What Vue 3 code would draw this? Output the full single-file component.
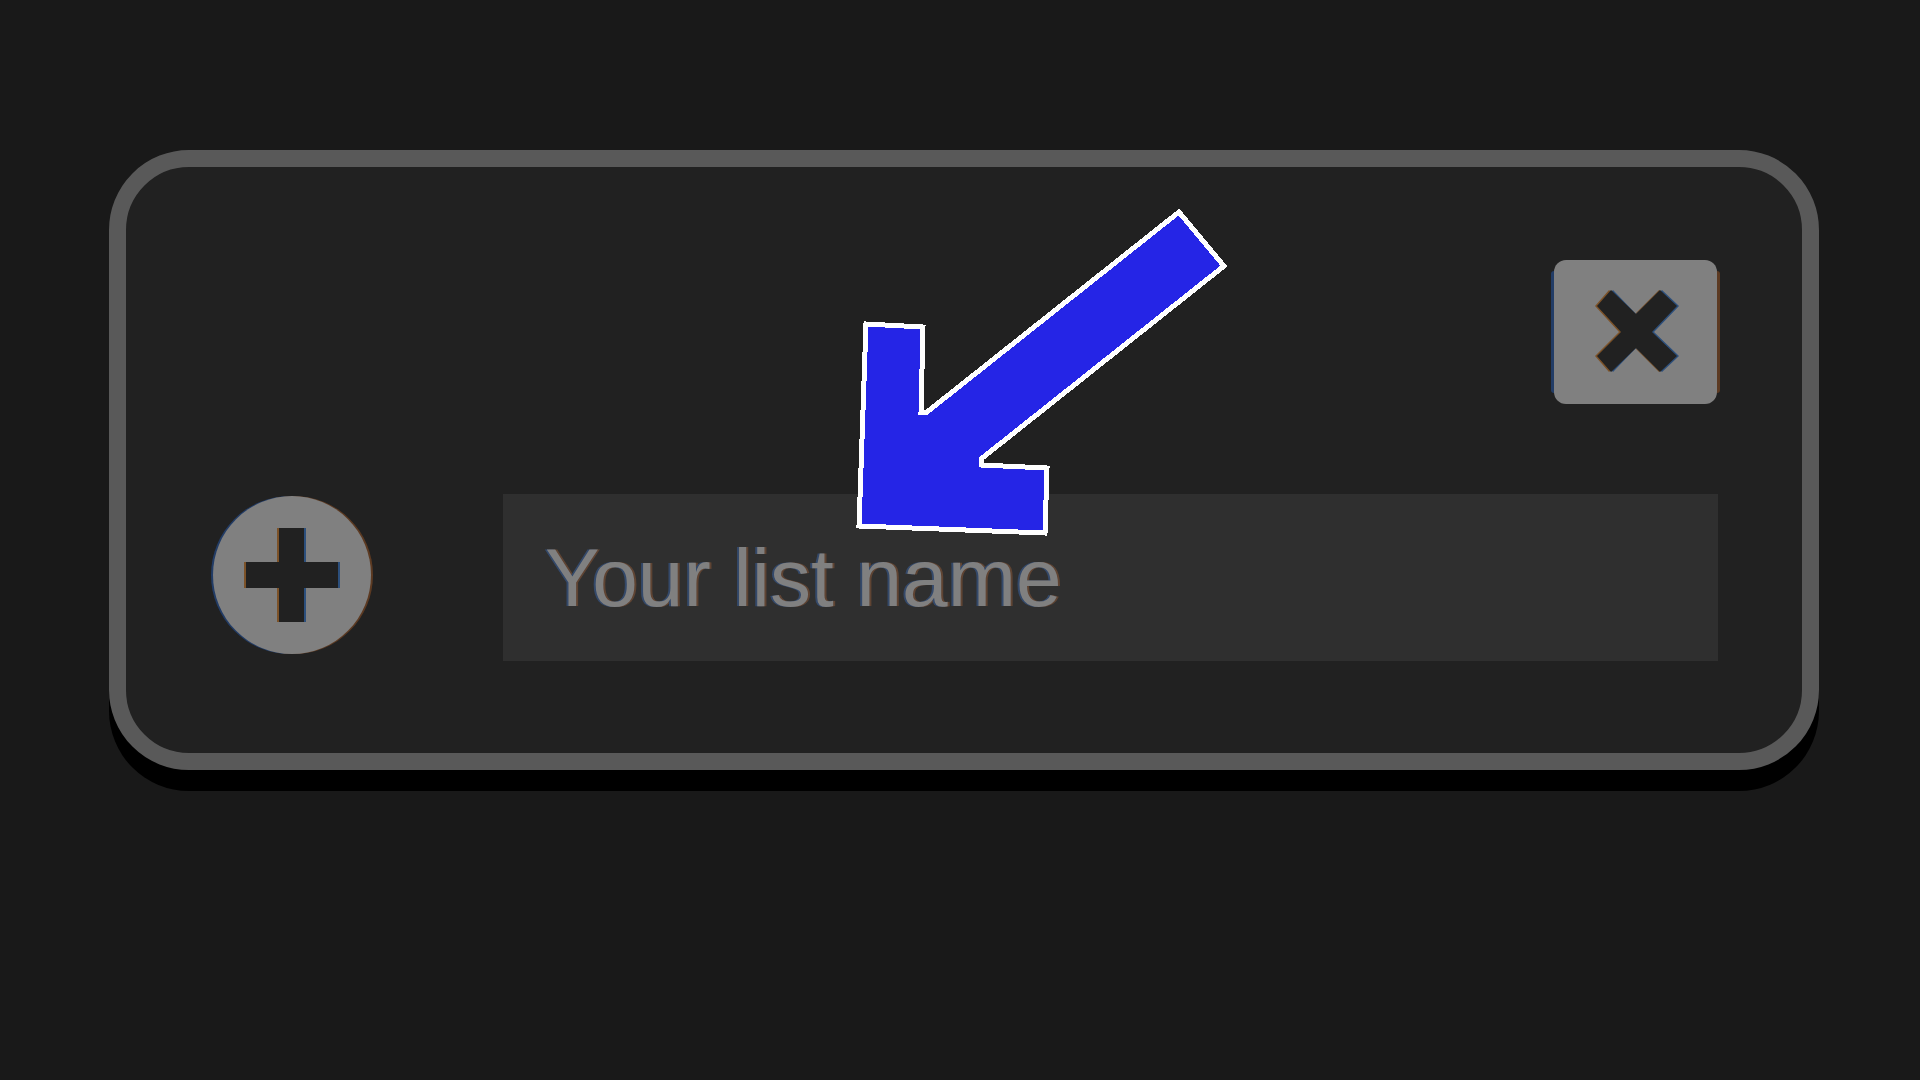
<script setup>
import { ref } from 'vue'

const listName = ref('')
</script>

<template>
  <main class="page">
    <form class="card" @submit.prevent>
      <div class="card-top">
        <button class="close" type="button" aria-label="Close">
          <svg viewBox="0 0 168 146" aria-hidden="true">
            <rect class="fringe-cool" x="1" y="12" width="8" height="122" rx="3" />
            <rect class="fringe-warm" x="162" y="12" width="8" height="122" rx="3" />
            <rect class="fill" x="4" y="1" width="163" height="144" rx="12" />
            <path class="edge-warm" d="M43 47 57 31 83 55 107 31 123 47 99 73 123 97 107 113 83 89 57 113 43 97 67 73Z" transform="translate(2 0)" />
            <path class="edge-cool" d="M47 47 61 31 84 55 110 31 127 47 102 73 127 97 110 113 84 89 61 113 47 97 71 73Z" transform="translate(2 0)" />
            <path class="hole" d="M45 47 59 31 84 55 108 31 125 47 100 73 125 97 108 113 84 89 59 113 45 97 69 73Z" transform="translate(2 0)" />
          </svg>
        </button>
      </div>
      <div class="card-row">
        <button class="add" type="submit" aria-label="Add list">
          <svg viewBox="0 0 164 164" aria-hidden="true">
            <circle class="fringe-cool" cx="80" cy="81" r="79" />
            <circle class="fringe-warm" cx="84" cy="81" r="79" />
            <circle class="fill" cx="82" cy="81" r="79" />
            <path class="edge-warm" d="M67 34H93V68H126V94H93V128H67V94H34V68H67Z" />
            <path class="edge-cool" d="M71 34H96V68H130V94H96V128H71V94H38V68H71Z" />
            <path class="hole" d="M69 34H94V68H128V94H94V128H69V94H36V68H69Z" />
          </svg>
        </button>
        <input v-model="listName" class="name" type="text" placeholder="Your list name" aria-label="Your list name">
      </div>
      <svg class="pointer" viewBox="850 200 390 340" aria-hidden="true">
        <path d="M866 324 923 327 921 412H927L1179 212 1224 266 981 459V465L1047 468 1045 533 859 526Z" />
      </svg>
    </form>
  </main>
</template>

<style>
body {
  margin: 0;
  background: #191919;
}
</style>

<style scoped>
.page {
  box-sizing: border-box;
  min-height: 100vh;
  padding: 150px 101px 80px 109px;
  font-family: "Liberation Sans", Arial, sans-serif;
}

.card {
  position: relative;
  display: flex;
  flex-direction: column;
  gap: 89px;
  padding: 92px 84px;
  border: 17px solid #595959;
  border-radius: 80px;
  background: #212121;
  box-shadow: 0 21px 0 #000;
}

.card-top {
  display: flex;
  justify-content: flex-end;
}

.card-row {
  display: flex;
  align-items: flex-start;
  gap: 129px;
}

.close,
.add {
  flex: none;
  padding: 0;
  border: 0;
  background: none;
  cursor: pointer;
}

.close svg,
.add svg {
  display: block;
  overflow: visible;
}

.close svg {
  width: 168px;
  height: 146px;
}

.add svg {
  width: 164px;
  height: 164px;
}

.fill {
  fill: #808080;
}

.hole {
  fill: #212121;
}

.fringe-cool {
  fill: #223c66;
}

.fringe-warm {
  fill: #5c3a22;
}

.edge-cool {
  fill: #2c4f7c;
}

.edge-warm {
  fill: #7c5228;
}

.name {
  flex: 1;
  box-sizing: border-box;
  min-width: 0;
  height: 167px;
  padding: 0 42px;
  border: 0;
  border-radius: 0;
  outline: 0;
  background: #2f2f2f;
  color: #808080;
  font-family: inherit;
  font-size: 82px;
}

.name::placeholder {
  color: #808080;
  opacity: 1;
  text-shadow: -2px 0 0 #34496a, 2px 0 0 #5f4433;
}

.pointer {
  position: absolute;
  top: 33px;
  left: 724px;
  width: 390px;
  height: 340px;
  pointer-events: none;
}

.pointer path {
  fill: #2525e6;
  stroke: #fff;
  stroke-width: 5px;
  shape-rendering: crispEdges;
}
</style>
